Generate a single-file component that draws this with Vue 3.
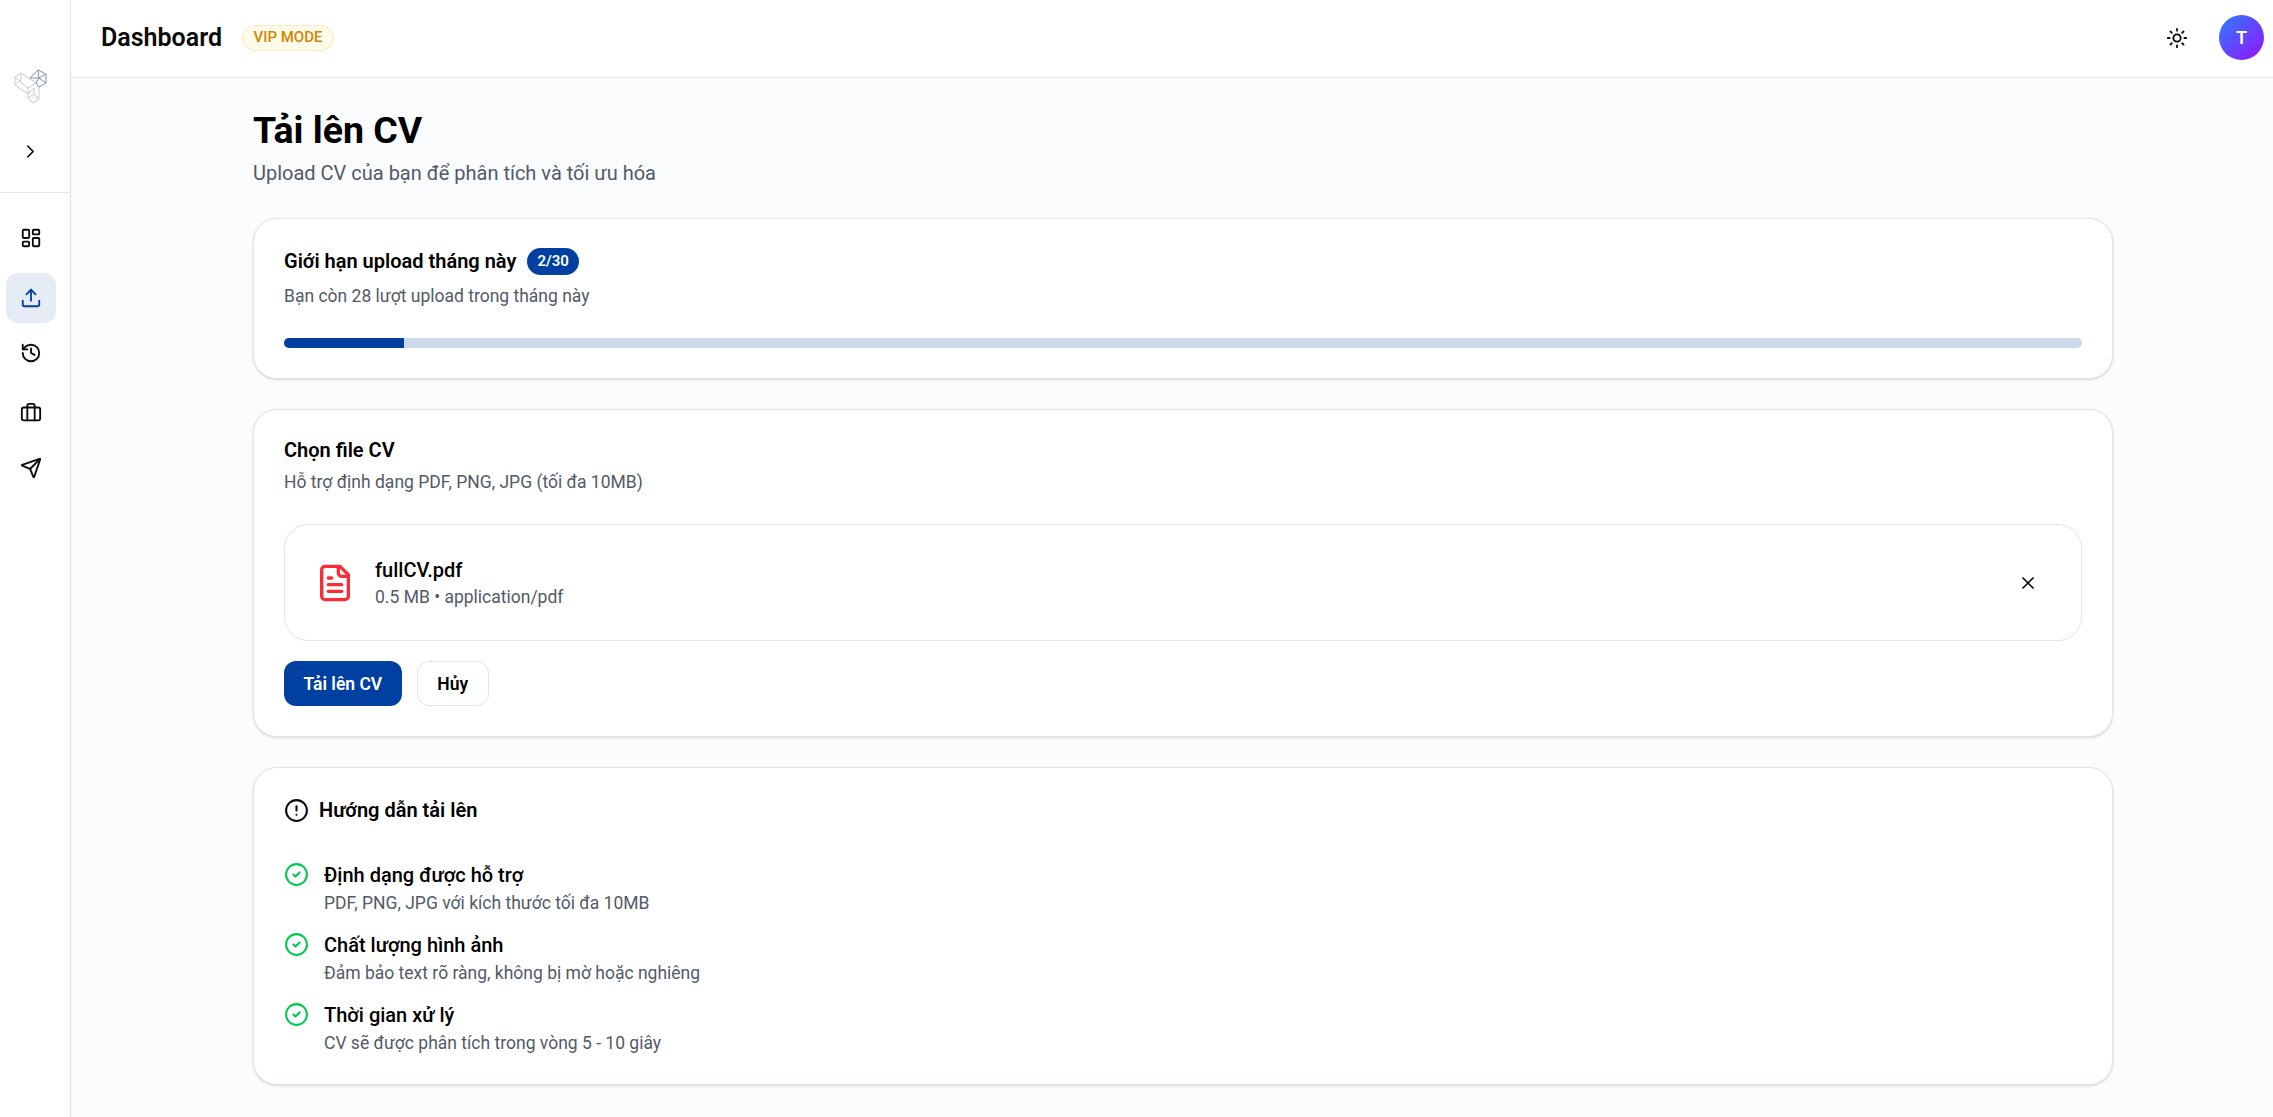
<script setup>
const guides = [
  { t: 'Định dạng được hỗ trợ', d: 'PDF, PNG, JPG với kích thước tối đa 10MB' },
  { t: 'Chất lượng hình ảnh', d: 'Đảm bảo text rõ ràng, không bị mờ hoặc nghiêng' },
  { t: 'Thời gian xử lý', d: 'CV sẽ được phân tích trong vòng 5 - 10 giây' },
]
</script>

<template>
  <div class="app">
    <aside class="side">
      <div class="side-top">
        <svg class="logo" width="33" height="35" viewBox="0 0 33 35" fill="none" stroke-width="1" stroke-linejoin="round">
          <g stroke="#c6ccd1">
            <path d="M1 8 L7 4 L22 14 L14 19 Z" />
            <path d="M1 8 L1 16 L14 25 L14 19" />
            <path d="M7 4 L7 11 L1 16" />
            <path d="M14 25 L14 29 L19 34 L25 30 L25 18" />
            <path d="M14 29 L20 25 L25 30 M20 25 L20 19 L14 25" />
          </g>
          <g stroke="#84939d">
            <path d="M16 9 L24 1 L32 5 L32 14 L25 18 L22 14" />
            <path d="M24 1 L25 9 L32 14 M25 9 L16 9" />
            <path d="M22 14 L25 9 L32 5" />
          </g>
        </svg>
        <button class="icon-btn chev" aria-label="Mở rộng">
          <svg width="21" height="21" viewBox="0 0 24 24" fill="none" stroke="#0a0a0a" stroke-width="2" stroke-linecap="round" stroke-linejoin="round"><path d="m9 18 6-6-6-6" /></svg>
        </button>
      </div>
      <nav class="nav">
        <a class="nav-item">
          <svg width="22" height="22" viewBox="0 0 24 24" fill="none" stroke="currentColor" stroke-width="2" stroke-linecap="round" stroke-linejoin="round"><rect x="3" y="3" width="7" height="9" rx="1" /><rect x="14" y="3" width="7" height="5" rx="1" /><rect x="14" y="12" width="7" height="9" rx="1" /><rect x="3" y="16" width="7" height="5" rx="1" /></svg>
        </a>
        <a class="nav-item active">
          <svg width="22" height="22" viewBox="0 0 24 24" fill="none" stroke="currentColor" stroke-width="2" stroke-linecap="round" stroke-linejoin="round"><path d="M12 3v12" /><path d="m17 8-5-5-5 5" /><path d="M21 15v4a2 2 0 0 1-2 2H5a2 2 0 0 1-2-2v-4" /></svg>
        </a>
        <a class="nav-item">
          <svg width="22" height="22" viewBox="0 0 24 24" fill="none" stroke="currentColor" stroke-width="2" stroke-linecap="round" stroke-linejoin="round"><path d="M3 12a9 9 0 1 0 9-9 9.75 9.75 0 0 0-6.74 2.74L3 8" /><path d="M3 3v5h5" /><path d="M12 7v5l4 2" /></svg>
        </a>
        <a class="nav-item">
          <svg width="22" height="22" viewBox="0 0 24 24" fill="none" stroke="currentColor" stroke-width="2" stroke-linecap="round" stroke-linejoin="round"><path d="M16 20V4a2 2 0 0 0-2-2h-4a2 2 0 0 0-2 2v16" /><rect x="2" y="6" width="20" height="14" rx="2" /></svg>
        </a>
        <a class="nav-item">
          <svg width="22" height="22" viewBox="0 0 24 24" fill="none" stroke="currentColor" stroke-width="2" stroke-linecap="round" stroke-linejoin="round"><path d="M14.536 21.686a.5.5 0 0 0 .937-.024l6.5-19a.496.496 0 0 0-.635-.635l-19 6.5a.5.5 0 0 0-.024.937l7.93 3.18a2 2 0 0 1 1.112 1.11z" /><path d="m21.854 2.147-10.94 10.939" /></svg>
        </a>
      </nav>
    </aside>

    <div class="right">
      <header class="topbar">
        <div class="top-left">
          <span class="top-title">Dashboard</span>
          <span class="vip">VIP MODE</span>
        </div>
        <div class="top-right">
          <svg class="sun" width="22" height="22" viewBox="0 0 24 24" fill="none" stroke="#0a0a0a" stroke-width="2" stroke-linecap="round" stroke-linejoin="round"><circle cx="12" cy="12" r="4" /><path d="M12 2v2" /><path d="M12 20v2" /><path d="m4.93 4.93 1.41 1.41" /><path d="m17.66 17.66 1.41 1.41" /><path d="M2 12h2" /><path d="M20 12h2" /><path d="m6.34 17.66-1.41 1.41" /><path d="m19.07 4.93-1.41 1.41" /></svg>
          <div class="avatar">T</div>
        </div>
      </header>

      <main class="main">
        <div class="content">
          <h1 class="h1">Tải lên CV</h1>
          <p class="lead">Upload CV của bạn để phân tích và tối ưu hóa</p>

          <section class="card limit">
            <div class="title-row">
              <h2 class="card-title">Giới hạn upload tháng này</h2>
              <span class="count">2/30</span>
            </div>
            <p class="muted">Bạn còn 28 lượt upload trong tháng này</p>
            <div class="track"><div class="fill" :style="{ width: '6.67%' }"></div></div>
          </section>

          <section class="card pick">
            <h2 class="card-title">Chọn file CV</h2>
            <p class="muted">Hỗ trợ định dạng PDF, PNG, JPG (tối đa 10MB)</p>
            <div class="file">
              <svg width="40" height="40" viewBox="0 0 24 24" fill="none" stroke="#fb2c36" stroke-width="2" stroke-linecap="round" stroke-linejoin="round"><path d="M15 2H6a2 2 0 0 0-2 2v16a2 2 0 0 0 2 2h12a2 2 0 0 0 2-2V7Z" /><path d="M14 2v4a2 2 0 0 0 2 2h4" /><path d="M10 9H8" /><path d="M16 13H8" /><path d="M16 17H8" /></svg>
              <div class="file-info">
                <div class="file-name">fullCV.pdf</div>
                <div class="file-meta">0.5 MB • application/pdf</div>
              </div>
              <button class="close" aria-label="Xóa">
                <svg width="20" height="20" viewBox="0 0 24 24" fill="none" stroke="#0a0a0a" stroke-width="2" stroke-linecap="round" stroke-linejoin="round"><path d="M18 6 6 18" /><path d="m6 6 12 12" /></svg>
              </button>
            </div>
            <div class="actions">
              <button class="btn primary">Tải lên CV</button>
              <button class="btn ghost">Hủy</button>
            </div>
          </section>

          <section class="card guide">
            <div class="guide-head">
              <svg width="25" height="25" viewBox="0 0 24 24" fill="none" stroke="#0a0a0a" stroke-width="2" stroke-linecap="round" stroke-linejoin="round"><circle cx="12" cy="12" r="10" /><line x1="12" y1="8" x2="12" y2="12" /><line x1="12" y1="16" x2="12.01" y2="16" /></svg>
              <h2 class="card-title">Hướng dẫn tải lên</h2>
            </div>
            <ul class="guide-list">
              <li v-for="g in guides" :key="g.t" class="guide-item">
                <svg class="check" width="25" height="25" viewBox="0 0 24 24" fill="none" stroke="#00c950" stroke-width="2" stroke-linecap="round" stroke-linejoin="round"><circle cx="12" cy="12" r="10" /><path d="m9 12 2 2 4-4" /></svg>
                <div>
                  <div class="g-title">{{ g.t }}</div>
                  <div class="g-desc">{{ g.d }}</div>
                </div>
              </li>
            </ul>
          </section>
        </div>
      </main>
    </div>
  </div>
</template>

<style>
html, body { margin: 0; padding: 0; }
</style>

<style scoped>
* { box-sizing: border-box; }
.app { display: flex; height: 1117px; overflow: hidden; font-family: Roboto, "Noto Sans", sans-serif; color: #0a0a0a; background: #fff; }
.side { width: 71px; flex: none; border-right: 1px solid #e2e4e8; background: #fff; display: flex; flex-direction: column; }
.side-top { height: 193px; border-bottom: 1px solid #e2e4e8; display: flex; flex-direction: column; align-items: center; padding: 69px 10px 0 0; }
.logo { display: block; }
.icon-btn { border: 0; background: none; padding: 0; display: flex; }
.chev { margin-top: 37px; margin-left: 1px; }
.nav { display: flex; flex-direction: column; padding: 20px 0 0 6px; }
.nav-item { width: 50px; height: 50px; border-radius: 12px; display: flex; align-items: center; justify-content: center; color: #0a0a0a; }
.nav-item:nth-child(even) { margin-top: 10px; }
.nav-item:nth-child(odd):not(:first-child) { margin-top: 5px; }
.nav-item.active { background: #e6ecf6; color: #0040a1; }
.right { flex: 1; min-width: 0; display: flex; flex-direction: column; }
.topbar { height: 78px; flex: none; background: #fff; border-bottom: 1px solid #e2e4e8; display: flex; align-items: center; justify-content: space-between; padding: 0 9px 2px 30px; }
.top-left { display: flex; align-items: center; gap: 20px; }
.top-title { font-size: 25px; font-weight: 600; line-height: 32px; }
.vip { height: 26px; padding: 0 10.5px 1px; border-radius: 13px; border: 1px solid #fde9bd; background: #fffbeb; color: #d08700; font-size: 15px; font-weight: 500; display: flex; align-items: center; }
.top-right { display: flex; align-items: center; gap: 31px; }
.sun { display: block; }
.avatar { width: 45px; height: 45px; border-radius: 50%; background: linear-gradient(135deg, #2b7fff, #9810fa); color: #fff; display: flex; align-items: center; justify-content: center; font-size: 18px; font-weight: 600; }
.main { flex: 1; background: #fbfcfe; padding: 30px 160px 0 182px; }
.content { display: flex; flex-direction: column; }
.h1 { margin: 0; font-size: 37.5px; line-height: 45px; font-weight: 700; color: #000; }
.lead { margin: 6px 0 0; font-size: 20px; line-height: 28px; color: #525a66; }
.card { background: #fff; border: 1px solid #e2e4e8; border-radius: 24px; box-shadow: 0 1px 3px rgba(0,0,0,.12), 0 1px 2px -1px rgba(0,0,0,.1); padding: 30px; margin-bottom: 30px; }
.limit { margin-top: 31px; height: 161px; padding-top: 28px; }
.pick { height: 328px; padding-top: 26px; }
.guide { height: 318px; padding-top: 28px; }
.title-row { display: flex; align-items: center; gap: 11px; }
.card-title { margin: 0; font-size: 20px; line-height: 28px; font-weight: 600; color: #000; }
.count { background: #0040a1; color: #fff; font-size: 15px; font-weight: 600; height: 27px; padding: 0 10px; border-radius: 14px; display: flex; align-items: center; }
.muted { margin: 6px 0 0; font-size: 17.5px; line-height: 25px; color: #525a66; }
.limit .muted { margin-top: 9px; }
.track { margin-top: 29px; height: 10px; border-radius: 5px; background: #ccd9eb; overflow: hidden; }
.fill { height: 100%; background: #0040a1; }
.file { margin-top: 29px; height: 117px; border: 1px solid #e2e4e8; border-radius: 24px; display: flex; align-items: center; padding: 0 30px; gap: 20px; }
.file-info { flex: 1; }
.file-name { font-size: 20px; line-height: 28px; font-weight: 500; color: #000; }
.file-meta { font-size: 17.5px; line-height: 25px; color: #525a66; margin-top: 1px; }
.close { border: 0; background: none; padding: 0; display: flex; margin-right: 13px; }
.actions { display: flex; gap: 15px; margin-top: 20px; }
.btn { height: 45px; font-family: inherit; font-size: 17.5px; font-weight: 600; border-radius: 12px; padding: 0 19.5px; display: flex; align-items: center; }
.primary { background: #0040a1; color: #fff; border: 0; }
.ghost { background: #fff; color: #000; border: 1px solid #e2e4e8; }
.guide-head { display: flex; align-items: center; gap: 10px; }
.guide-list { list-style: none; padding: 0; margin: 37px 0 0; display: flex; flex-direction: column; gap: 15px; }
.guide-item { display: flex; gap: 15px; }
.check { flex: none; margin-top: 0.5px; }
.g-title { font-size: 20px; line-height: 28px; font-weight: 500; color: #000; }
.g-desc { font-size: 17.5px; line-height: 25px; color: #525a66; margin-top: 2px; }
</style>
